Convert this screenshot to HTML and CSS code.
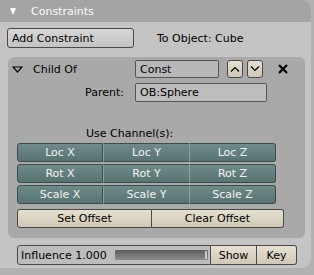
FILE: index.html
```html
<!DOCTYPE html>
<html>
<head>
<meta charset="utf-8">
<link rel="stylesheet" href="styles.css">
</head>
<body>
<div class="window">
  <div class="hdr"><span class="hdr-tri"></span><span>Constraints</span></div>
  <div class="toprow">
    <div class="btn grey add">Add Constraint</div>
    <div class="toobj">To Object: Cube</div>
  </div>
  <div class="cpanel">
    <div class="childrow">
      <svg class="ctri" width="11" height="7" viewBox="0 0 11 7"><polygon points="1,1 10,1 5.5,6" fill="none" stroke="#000" stroke-width="1.2"/></svg>
      <div class="cname">Child Of</div>
      <div class="field const">Const</div>
      <div class="btn beige arrow up"><svg width="10" height="6" viewBox="0 0 10 6"><polyline points="1,5.5 5,1.5 9,5.5" fill="none" stroke="#000" stroke-width="1.2"/></svg></div>
      <div class="btn beige arrow down"><svg width="10" height="6" viewBox="0 0 10 6"><polyline points="1,0.5 5,4.5 9,0.5" fill="none" stroke="#000" stroke-width="1.2"/></svg></div>
      <svg class="xicon" width="10" height="10" viewBox="0 0 10 10"><path d="M1 1 L9 9 M9 1 L1 9" stroke="#000" stroke-width="2.2"/></svg>
    </div>
    <div class="parentrow">
      <div class="plabel">Parent:</div>
      <div class="field ob">OB:Sphere</div>
    </div>
    <div class="uselabel">Use Channel(s):</div>
    <div class="grid">
      <div class="row"><div class="tb l">Loc X</div><div class="tb m">Loc Y</div><div class="tb r">Loc Z</div></div>
      <div class="row"><div class="tb l">Rot X</div><div class="tb m">Rot Y</div><div class="tb r">Rot Z</div></div>
      <div class="row"><div class="tb l">Scale X</div><div class="tb m">Scale Y</div><div class="tb r">Scale Z</div></div>
    </div>
    <div class="offrow">
      <div class="btn beige setoff">Set Offset</div>
      <div class="btn beige clearoff">Clear Offset</div>
    </div>
  </div>
  <div class="infrow">
    <div class="influence">
      <span class="inftext">Influence 1.000</span>
      <span class="slider"><span class="knob"></span></span>
    </div>
    <div class="btn beige show">Show</div>
    <div class="btn beige key">Key</div>
  </div>
</div>
</body>
</html>
```
FILE: styles.css
```css
* { box-sizing: border-box; }
body {
  margin: 0;
  background: #b1b1b1;
  font-family: "DejaVu Sans", sans-serif;
  font-size: 11px;
  color: #000;
}
.window {
  width: 311px;
  height: 268px;
  background: #c4c4c4;
  border-radius: 0 9px 9px 0;
  overflow: hidden;
}
.hdr {
  height: 22px;
  background: #a4a4a4;
  display: flex;
  align-items: center;
  padding-left: 10px;
  color: #fafafa;
}
.hdr-tri {
  width: 0;
  height: 0;
  border-left: 3.5px solid transparent;
  border-right: 3.5px solid transparent;
  border-top: 7px solid #fff;
  margin-right: 15px;
  margin-top: 1px;
}
.btn {
  display: flex;
  align-items: center;
  justify-content: center;
  border: 1px solid #4a4a4a;
  border-radius: 3px;
}
.grey { background: linear-gradient(#d7d7d7, #c3c3c3); }
.beige { background: linear-gradient(#e6e0d2, #cfc8b6); }
.toprow {
  display: flex;
  align-items: center;
  padding: 6px 0 0 7px;
}
.add {
  width: 127px;
  height: 20px;
  justify-content: flex-start;
  padding-left: 4px;
}
.toobj { margin-left: 23px; }
.cpanel {
  margin: 9px 0 0 8px;
  width: 297px;
  height: 181px;
  background: #a9a9a9;
  border-radius: 6px;
  padding: 3px 0 0 4px;
}
.childrow {
  display: flex;
  align-items: center;
  height: 18px;
}
.ctri { margin-right: 10px; margin-top: 1px; }
.cname { width: 102px; }
.field {
  height: 100%;
  border: 1px solid #555;
  border-radius: 2px;
  background: #b8b8b8;
  display: flex;
  align-items: center;
  padding-left: 4px;
}
.const { width: 84px; }
.arrow { width: 16px; height: 18px; }
.up { margin-left: 8px; }
.down { margin-left: 4px; }
.xicon { margin-left: 15px; }
.parentrow {
  display: flex;
  align-items: center;
  height: 19px;
  margin-top: 5px;
}
.plabel {
  width: 112px;
  text-align: right;
  margin-right: 11px;
}
.ob { width: 132px; background: #bdbdbd; }
.uselabel {
  margin-top: 25px;
  padding-left: 74px;
  height: 13px;
  line-height: 13px;
}
.grid {
  margin: 3px 0 0 5px;
  width: 259px;
  display: flex;
  flex-direction: column;
  gap: 2px;
}
.row {
  display: grid;
  grid-template-columns: 86px 86px 87px;
  height: 19px;
}
.tb {
  display: flex;
  align-items: center;
  justify-content: center;
  color: #f2f2f2;
  background: linear-gradient(#6f8b89, #577472);
  border: 1px solid #3c4c4b;
}
.tb.l { border-radius: 3px 0 0 3px; }
.tb.m { border-left: 1px solid #8aa3a1; border-right: none; }
.tb.r { border-radius: 0 3px 3px 0; border-left: 1px solid #8aa3a1; }
.offrow {
  display: flex;
  margin: 5px 0 0 5px;
  height: 19px;
}
.setoff { width: 135px; border-radius: 3px 0 0 3px; }
.clearoff { width: 132px; border-left: none; border-radius: 0 3px 3px 0; }
.infrow {
  display: flex;
  margin: 7px 0 0 17px;
  height: 20px;
}
.influence {
  width: 194px;
  height: 20px;
  border: 1px solid #4a4a4a;
  border-radius: 3px 0 0 3px;
  background: #bdbdbd;
  display: flex;
  align-items: center;
  padding-left: 3px;
}
.inftext { width: 94px; }
.slider {
  position: relative;
  width: 93px;
  height: 10px;
  background: linear-gradient(#5d5d5d, #8c8c8c);
  border-radius: 1px;
}
.knob {
  position: absolute;
  right: 1px;
  top: 1px;
  width: 2px;
  height: 8px;
  background: #c8c8c8;
}
.show { width: 46px; border-left: none; border-radius: 0; }
.key { width: 40px; border-left: none; border-radius: 0 3px 3px 0; }
```
